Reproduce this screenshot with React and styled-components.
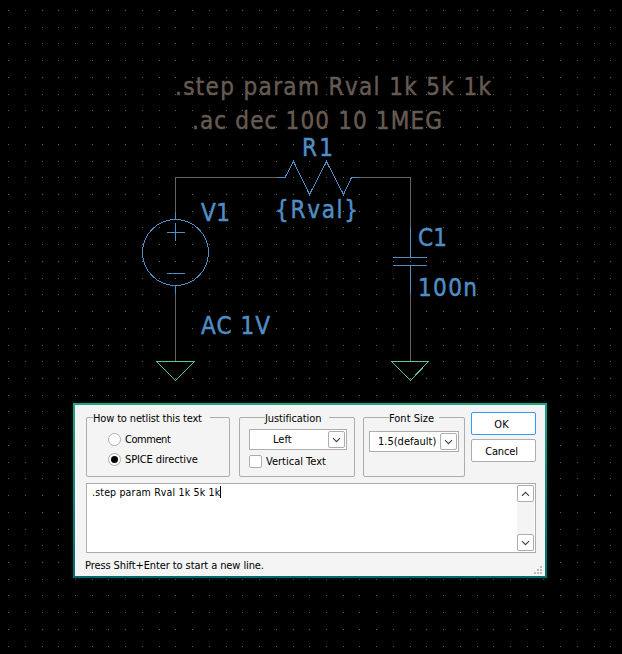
import React from "react";
import styled, { createGlobalStyle } from "styled-components";

const GlobalStyle = createGlobalStyle`
  html, body { margin: 0; background: #000; overflow: hidden; }
  *, *::before, *::after { box-sizing: border-box; }
`;

const Workspace = styled.main`
  position: relative;
  width: 622px;
  height: 654px;
  background: #000;
`;

const Schematic = styled.svg`
  display: block;
  shape-rendering: crispEdges;
`;

const Caption = styled.text`
  font: 24px "DejaVu Sans Condensed", "DejaVu Sans", sans-serif;
  font-stretch: condensed;
  fill: ${(p) => (p.$part ? "#508fc5" : "#665b52")};
  stroke: ${(p) => (p.$part ? "#508fc5" : "#665b52")};
  stroke-width: 0.45px;
`;

const Stroke = styled.path`
  fill: none;
  stroke-width: 1px;
  stroke: ${(p) => ({ wire: "#6c6057", part: "#508fc5", ground: "#55c893" })[p.$kind]};
`;

const Ring = styled.circle`
  fill: none;
  stroke: #508fc5;
`;

const Dialog = styled.section`
  position: absolute;
  left: 73px;
  top: 403px;
  width: 474px;
  height: 175px;
  padding: 2px;
  background: linear-gradient(#1fa486, #006c6d);
  box-shadow: 0 0 3px 1px #0b1714;
  font: 11px "DejaVu Sans Condensed", "DejaVu Sans", sans-serif;
  font-stretch: condensed;
  color: #000;
`;

const DialogBody = styled.div`
  position: relative;
  height: 100%;
  padding: 7px 9px 0 11px;
  background: #f4f4f4;
`;

const TopRow = styled.div`
  display: flex;
  align-items: flex-start;
  height: 71px;
`;

const Group = styled.div`
  width: ${(p) => p.$width}px;
  height: 60px;
  margin: 5px ${(p) => p.$gap}px 0 0;
  padding: 0 5px 0 ${(p) => p.$pad}px;
  border: 1px solid #adadad;
  border-radius: 2px;
`;

const Legend = styled.div`
  width: ${(p) => p.$width}px;
  height: 14px;
  margin: -7px 0 0 ${(p) => p.$indent}px;
  background: #f4f4f4;
  line-height: 16px;
`;

const Label = styled.span`
  display: inline-block;
  white-space: pre;
  letter-spacing: ${(p) => p.$spacing || 0}px;
`;

const Choice = styled.label`
  display: flex;
  align-items: center;
  gap: ${(p) => p.$gap}px;
  height: 13px;
  margin-top: ${(p) => p.$top}px;
`;

const Radio = styled.span`
  display: grid;
  place-items: center;
  width: 13px;
  height: 13px;
  border: 1px solid #adadad;
  border-radius: 50%;
  background: #fff;
  &::after {
    content: "";
    width: 7px;
    height: 7px;
    border-radius: 50%;
    background: ${(p) => (p.$checked ? "#000" : "transparent")};
  }
`;

const Checkbox = styled.span`
  width: 13px;
  height: 13px;
  border: 1px solid #adadad;
  border-radius: 2px;
  background: #fff;
`;

const Select = styled.div`
  display: flex;
  align-items: center;
  justify-content: space-between;
  width: ${(p) => p.$width}px;
  height: 21px;
  margin-top: ${(p) => p.$top}px;
  padding: 0 1px 0 ${(p) => p.$indent}px;
  border: 1px solid #adadad;
  background: #fff;
`;

const ArrowButton = styled.span`
  display: grid;
  place-items: center;
  flex: none;
  width: 17px;
  height: 17px;
  border: 1px solid #adadad;
  border-radius: 2px;
  background: #fff;
`;

const Actions = styled.div`
  display: flex;
  flex-direction: column;
  gap: 4px;
`;

const Action = styled.button`
  width: 65px;
  height: 23px;
  padding: 1px 4px 0 0;
  border: 1px solid ${(p) => (p.$primary ? "#3298fd" : "#adadad")};
  border-radius: 2px;
  background: #fff;
  color: #000;
  font: inherit;
`;

const Editor = styled.div`
  display: flex;
  justify-content: space-between;
  width: 450px;
  height: 70px;
  border: 1px solid #adadad;
  background: #fff;
`;

const EditorLine = styled.div`
  display: flex;
  height: 12px;
  margin: 2px 0 0 5px;
  font-size: 10.5px;
  line-height: 13px;
`;

const Caret = styled.i`
  width: 1px;
  height: 12px;
  background: #000;
`;

const Scrollbar = styled.div`
  display: flex;
  flex-direction: column;
  justify-content: space-between;
  width: 17px;
  margin: 1px 1px 1px 0;
  background: #f4f4f4;
`;

const Hint = styled.div`
  margin: 5px 0 0 -1px;
  line-height: 16px;
`;

const Grip = styled.svg`
  position: absolute;
  right: 3px;
  bottom: 2px;
  fill: #bdbdbd;
`;

const columns = [8, 25, 42, 58, 75, 92, 108, 125, 142, 159, 175, 192, 209, 226, 242, 259, 276, 293, 309, 326, 343, 359, 376, 393, 410, 426, 443, 460, 477, 493, 510, 527, 543, 560, 577, 594, 610];
const rows = [10, 27, 43, 60, 77, 94, 110, 127, 144, 161, 177, 194, 211, 227, 244, 261, 278, 294, 311, 328, 345, 361, 378, 395, 411, 428, 445, 462, 478, 495, 512, 529, 545, 562, 579, 595, 612, 629, 646];
const dots = rows.map((y) => columns.map((x) => `M${x} ${y}h1v1h-1z`).join("")).join("");

const captions = [
  { x: 175, y: 95, w: 316, text: ".step param Rval 1k 5k 1k" },
  { x: 192, y: 129, w: 250, text: ".ac dec 100 10 1MEG" },
  { x: 302, y: 156, w: 31, text: "R1", part: true },
  { x: 275, y: 218, w: 83, text: "{Rval}", part: true },
  { x: 201, y: 221, w: 29, text: "V1", part: true },
  { x: 201, y: 334, w: 69, text: "AC 1V", part: true },
  { x: 418, y: 246, w: 29, text: "C1", part: true },
  { x: 418, y: 296, w: 59, text: "100n", part: true },
];

function Chevron({ up }) {
  return (
    <svg width="9" height="6" viewBox="0 0 9 6" fill="none" stroke="#444" strokeWidth="1.2">
      <path d={up ? "M1 4.8 4.5 1.3 8 4.8" : "M1 1.2 4.5 4.7 8 1.2"} />
    </svg>
  );
}

function Circuit() {
  return (
    <Schematic width="622" height="654" viewBox="0 0 622 654">
      <path d={dots} fill="#666259" />
      <Stroke $kind="ground" d="M157 361.5H194.5L175.5 380.5L156.5 361.5M391.5 361.5H428.5L410.5 380.5L391.5 361.5" />
      <Stroke $kind="wire" d="M175.5 212V177.5H277M359 177.5H410.5V228M175.5 294V361M410.5 294V361" />
      <Stroke $kind="part" d="M175.5 212V219M175.5 286V294M167 232.5H185M175.5 223V241M167 273.5H185M277 177.5H285L293.5 161.5L309.5 194.5L326.5 161.5L343.5 194.5L351.5 177.5H359M410.5 228V257M393 257.5H427M393 265.5H427M410.5 265V294" />
      <Ring cx="175.5" cy="252.5" r="33" />
      {captions.map((c) => (
        <Caption key={c.text} x={c.x} y={c.y} textLength={c.w} $part={c.part}>{c.text}</Caption>
      ))}
    </Schematic>
  );
}

function DirectiveDialog() {
  return (
    <Dialog>
      <DialogBody>
        <TopRow>
          <Group $width={144} $gap={9} $pad={21}>
            <Legend $width={117} $indent={-15}><Label $spacing={-0.15}>How to netlist this text</Label></Legend>
            <Choice $top={8} $gap={4}><Radio /><Label $spacing={-0.45}>Comment</Label></Choice>
            <Choice $top={7} $gap={4}><Radio $checked /><Label $spacing={-0.12}>SPICE directive</Label></Choice>
          </Group>
          <Group $width={116} $gap={8} $pad={9}>
            <Legend $width={64} $indent={16}><Label $spacing={-0.1}>Justification</Label></Legend>
            <Select $width={98} $top={4} $indent={23}><Label>Left</Label><ArrowButton><Chevron /></ArrowButton></Select>
            <Choice $top={5} $gap={4}><Checkbox /><Label>Vertical Text</Label></Choice>
          </Group>
          <Group $width={102} $gap={6} $pad={5}>
            <Legend $width={50} $indent={20}><Label>Font Size</Label></Legend>
            <Select $width={90} $top={6} $indent={8}><Label>1.5(default)</Label><ArrowButton><Chevron /></ArrowButton></Select>
          </Group>
          <Actions>
            <Action $primary>OK</Action>
            <Action><Label $spacing={-0.15}>Cancel</Label></Action>
          </Actions>
        </TopRow>
        <Editor>
          <EditorLine><Label $spacing={0.17}>.step param Rval 1k 5k 1k</Label><Caret /></EditorLine>
          <Scrollbar>
            <ArrowButton><Chevron up /></ArrowButton>
            <ArrowButton><Chevron /></ArrowButton>
          </Scrollbar>
        </Editor>
        <Hint><Label $spacing={-0.1}>Press Shift+Enter to start a new line.</Label></Hint>
        <Grip width="8" height="8" shapeRendering="crispEdges">
          <path d="M6 0h2v2h-2zM3 3h2v2h-2zM6 3h2v2h-2zM0 6h2v2h-2zM3 6h2v2h-2zM6 6h2v2h-2z" />
        </Grip>
      </DialogBody>
    </Dialog>
  );
}

export default function App() {
  return (
    <>
      <GlobalStyle />
      <Workspace>
        <Circuit />
        <DirectiveDialog />
      </Workspace>
    </>
  );
}
